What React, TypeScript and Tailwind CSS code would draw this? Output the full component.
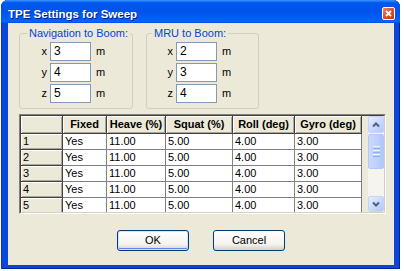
import { Fragment } from "react";

const font = "font-['Liberation_Sans',Arial,sans-serif]";

const colW = ["w-[42px]", "w-[44px]", "w-[59px]", "w-[67px]", "w-[62px]", "w-[67px]"];
const headers = ["", "Fixed", "Heave (%)", "Squat (%)", "Roll (deg)", "Gyro (deg)"];
const rows = [1, 2, 3, 4, 5].map(n => [String(n), "Yes", "11.00", "5.00", "4.00", "3.00"]);

function CoordRow({ axis, value, labelW }: { axis: string; value: string; labelW: string }) {
  return (
    <div className="flex h-[19px] items-center">
      <span className={`${labelW} text-right text-[11px] leading-[13px] text-black`}>{axis}</span>
      <div className="ml-[3px] h-[19px] w-[41px] border border-[#7f9db9] bg-white pl-[3px] text-[12px] leading-[17px] text-black">
        {value}
      </div>
      <span className="ml-[5px] text-[11px] leading-[13px] text-black">m</span>
    </div>
  );
}

function Group({ title, width, legendMl, labelW, values }: {
  title: string; width: string; legendMl: string; labelW: string; values: string[];
}) {
  return (
    <fieldset className={`${width} rounded-[3px] border border-[#d0d0bf] pb-[5px]`}>
      <legend className={`${legendMl} px-[2px] text-[11px] leading-[13px] text-[#0046d5]`}>{title}</legend>
      <div className="flex flex-col gap-[2px] pt-[2px]">
        <CoordRow axis="x" value={values[0]} labelW={labelW} />
        <CoordRow axis="y" value={values[1]} labelW={labelW} />
        <CoordRow axis="z" value={values[2]} labelW={labelW} />
      </div>
    </fieldset>
  );
}

function ScrollBtn({ dir, h }: { dir: "up" | "down"; h: string }) {
  return (
    <div className={`${h} flex w-[16px] items-center justify-center rounded-[2px] border border-[#c3d3fd] bg-[linear-gradient(135deg,#e6eefe,#c6d6fc_60%,#b4c9f8)]`}>
      <svg width="8" height="6" viewBox="0 0 8 6">
        {dir === "up"
          ? <path d="M1 4.5 L4 1.5 L7 4.5" fill="none" stroke="#4d6185" strokeWidth="2" />
          : <path d="M1 1.5 L4 4.5 L7 1.5" fill="none" stroke="#4d6185" strokeWidth="2" />}
      </svg>
    </div>
  );
}

function Grid() {
  return (
    <div className="ml-[11px] mt-[5px] h-[100px] w-[367px] border border-[#808080] border-b-white border-r-white">
      <div className="flex h-full w-full overflow-hidden border border-[#404040] border-b-[#d4d0c8] border-r-[#d4d0c8] bg-[#ece9d8]">
        <div className="flex flex-col">
          <div className="flex h-[18px] shrink-0">
            {headers.map((h, i) => (
              <div
                key={i}
                className={`${colW[i]} flex items-center justify-center border-b border-r border-[#404040] bg-[#ece9d8] text-[11px] font-bold text-black shadow-[inset_1px_1px_0_#ffffff,inset_-1px_-1px_0_#aca899]`}
              >
                {h}
              </div>
            ))}
          </div>
          {rows.map((r, ri) => (
            <div key={ri} className="flex h-[16px] shrink-0">
              {r.map((c, ci) => (
                <Fragment key={ci}>
                  {ci === 0 ? (
                    <div className={`${colW[ci]} flex items-center border-b border-r border-[#404040] bg-[#ece9d8] pl-[2px] text-[11px] text-black shadow-[inset_1px_1px_0_#ffffff,inset_-1px_-1px_0_#aca899]`}>
                      {c}
                    </div>
                  ) : (
                    <div className={`${colW[ci]} flex items-center border-b border-r border-[#808080] bg-white pl-[2px] text-[11px] text-black`}>
                      {c}
                    </div>
                  )}
                </Fragment>
              ))}
            </div>
          ))}
        </div>
        <div className="flex-1" />
        <div className="flex h-full w-[16px] flex-col bg-[#f5f4ef]">
          <ScrollBtn dir="up" h="h-[17px]" />
          <div className="mt-[1px] flex h-[35px] w-[16px] flex-col items-center justify-center gap-[1px] rounded-[2px] border border-[#b4c8f6] bg-[linear-gradient(90deg,#cad9fc,#bcd0fa_60%,#b0c6f6)]">
            <div className="h-[1px] w-[7px] bg-[#eef4fe]" />
            <div className="h-[1px] w-[7px] bg-[#8cb0f8]" />
            <div className="h-[1px] w-[7px] bg-[#eef4fe]" />
            <div className="h-[1px] w-[7px] bg-[#8cb0f8]" />
            <div className="h-[1px] w-[7px] bg-[#eef4fe]" />
            <div className="h-[1px] w-[7px] bg-[#8cb0f8]" />
          </div>
          <div className="flex-1" />
          <ScrollBtn dir="down" h="h-[16px]" />
        </div>
      </div>
    </div>
  );
}

function XpButton({ label, isDefault }: { label: string; isDefault?: boolean }) {
  return (
    <button
      className={`flex h-[21px] w-[72px] items-center justify-center rounded-[3px] border border-[#003c74] bg-[linear-gradient(180deg,#ffffff,#f4f3ee_70%,#d6d0c5)] text-[11px] text-black ${
        isDefault ? "shadow-[inset_0_0_0_1px_#cee7ff,inset_0_-1px_0_1px_#6982ee]" : ""
      }`}
    >
      {label}
    </button>
  );
}

export default function App() {
  return (
    <div className={`${font} h-[271px] w-[404px] bg-white pl-[1px]`}>
      <div className="flex h-[269px] w-[399px] flex-col overflow-hidden rounded-t-[7px] bg-[#0a46d8] shadow-[inset_1px_0_0_#0831d9,inset_-1px_0_0_#001ea0,inset_0_-1px_0_#001ea0]">
        {/* Title bar */}
        <div className="flex h-[23px] shrink-0 items-start bg-[linear-gradient(180deg,#3d95ff_0%,#0058ee_12%,#0053ea_50%,#0062fb_88%,#0066ff_94%,#0047d8_100%)] pl-[7px] pr-[5px]">
          <span className="mt-[7px] text-[11.5px] font-bold leading-[14px] text-white [text-shadow:1px_1px_#0a1883]">
            TPE Settings for Sweep
          </span>
          <div className="flex-1" />
          <div className="mt-[7px] flex h-[13px] w-[13px] items-center justify-center rounded-[2px] border border-white bg-[linear-gradient(135deg,#e9886a,#d8502a_50%,#c23d12)]">
            <svg width="7" height="7" viewBox="0 0 7 7">
              <path d="M1 1 L6 6 M6 1 L1 6" stroke="#ffffff" strokeWidth="1.8" />
            </svg>
          </div>
        </div>

        {/* Client area */}
        <div className="ml-[7px] flex h-[242px] w-[386px] flex-col bg-[#ece9d8] pt-[4px]">
          <div className="flex gap-[13px] pl-[11px]">
            <Group title="Navigation to Boom:" width="w-[114px]" legendMl="ml-[7px]" labelW="w-[27px]" values={["3", "4", "5"]} />
            <Group title="MRU to Boom:" width="w-[113px]" legendMl="ml-[5px]" labelW="w-[26px]" values={["2", "3", "4"]} />
          </div>

          <Grid />

          <div className="mt-[16px] flex justify-center gap-[24px]">
            <XpButton label="OK" isDefault />
            <XpButton label="Cancel" />
          </div>
        </div>
      </div>
    </div>
  );
}
